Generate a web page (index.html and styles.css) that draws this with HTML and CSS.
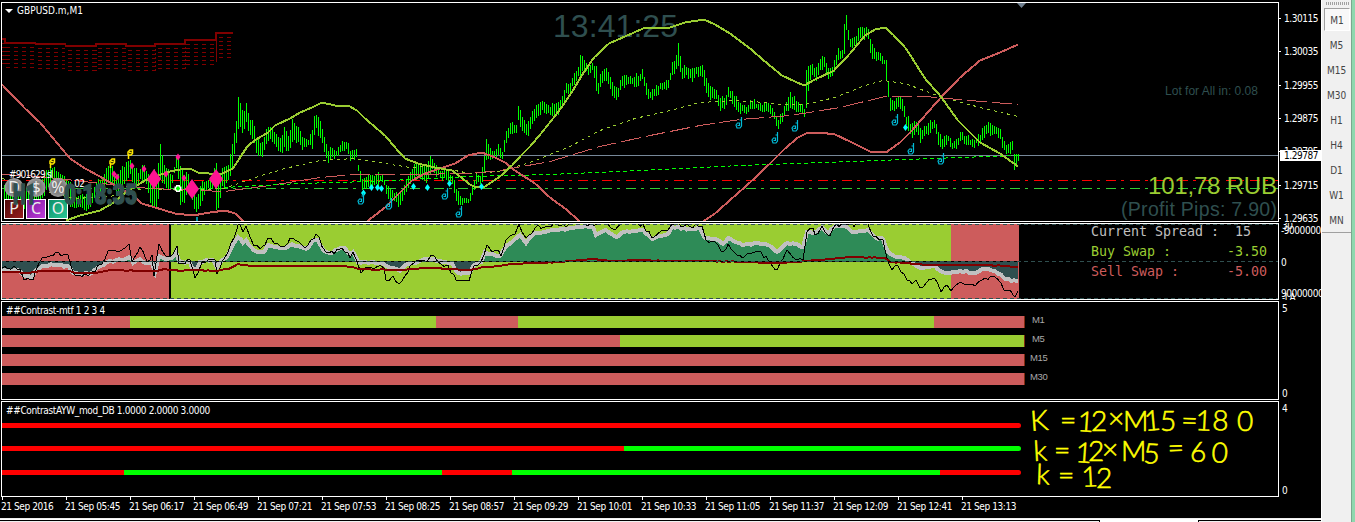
FILE: index.html
```html
<!DOCTYPE html>
<html lang="en">
<head>
  <meta charset="UTF-8" />
  <meta name="viewport" content="width=device-width, initial-scale=1.0" />
  <title>GBPUSD.m,M1</title>
  <link rel="stylesheet" href="styles.css">
</head>
<body>
  <main class="terminal">
    <section class="panel panel-price">
      <div class="plot">
        <svg id="price" viewBox="2 3 1276 218" width="1276" height="218">
          <text class="clock" x="553" y="37" textLength="125">13:41:25</text>
          <g id="steps"></g>
          <path class="px level" d="M2 155.5H1278" />
          <path class="px stop" d="M2 180.5H1278" />
          <path class="px entry" d="M2 188.5H1278" />
          <g id="bars"></g>
          <g id="lines"></g>
          <g id="marks"></g>
          <path d="M5 9h8l-4 4z" fill="#fff" />
          <path d="M1017 3h9l-4.500 5z" fill="#708090" />
          <text class="label" x="17" y="14" textLength="66">GBPUSD.m,M1</text>
          <text class="label" x="9" y="178" textLength="44">#901629 sl</text>
          <text class="label" x="70" y="187" textLength="15">.,02</text>
          <g class="round">
            <circle cx="14" cy="187.500" r="9.500" /><circle cx="36" cy="187.500" r="9.500" /><circle cx="58" cy="187.500" r="9.500" />
            <text x="14" y="193">D</text><text x="36" y="193">$</text><text x="58" y="193">%</text>
          </g>
          <g class="square">
            <rect x="4.500" y="199.500" width="19" height="19" fill="url(#gp)" />
            <rect x="26.500" y="199.500" width="19" height="19" fill="url(#gc)" />
            <rect x="48.500" y="199.500" width="19" height="19" fill="url(#go)" />
            <text x="14" y="214">P</text><text x="36" y="214">C</text><text x="58" y="214">O</text>
          </g>
          <text class="timer" x="13" y="204" textLength="23" lengthAdjust="spacingAndGlyphs">H1</text>
          <text class="timer" x="64" y="204" textLength="73" lengthAdjust="spacingAndGlyphs">0:18:35</text>
          <text class="lot" x="1165" y="95" textLength="93">Lot for All in: 0.08</text>
          <text class="profit" x="1148" y="194" textLength="129">101,78 RUB</text>
          <text class="pips" x="1121" y="216" textLength="156">(Profit Pips: 7.90)</text>
          <defs>
            <radialGradient id="gr"><stop offset="0" stop-color="#666" /><stop offset=".7" stop-color="#858585" /><stop offset="1" stop-color="#a0a0a0" /></radialGradient>
            <linearGradient id="gp" y2="1"><stop stop-color="#4c0808" /><stop offset="1" stop-color="#981d1d" /></linearGradient>
            <linearGradient id="gc" y2="1"><stop stop-color="#7a149c" /><stop offset="1" stop-color="#c040dc" /></linearGradient>
            <linearGradient id="go" y2="1"><stop stop-color="#0a8f68" /><stop offset="1" stop-color="#2dc796" /></linearGradient>
          </defs>
        </svg>
      </div>
      <div class="axis axis-price">
        <span>1.30115</span><span>1.30035</span><span>1.29955</span><span>1.29875</span><span>1.29795</span><span>1.29715</span><span>1.29635</span>
        <b class="current">1.29787</b>
      </div>
    </section>

    <section class="panel panel-osc">
      <div class="plot">
        <svg id="osc" viewBox="2 224 1276 75" width="1276" height="75">
          <rect x="2" y="224" width="167" height="75" fill="#cd5c5c" />
          <rect x="169" y="224" width="2" height="75" />
          <rect x="171" y="224" width="780" height="75" fill="#9acd32" />
          <rect x="951" y="224" width="68" height="75" fill="#cd5c5c" />
          <g id="waves"></g>
          <path class="px" d="M2 261.500H1019" stroke="#000" />
          <path class="px grid" d="M2 224.500H1278M2 261.500H1278M2 298.500H1278" />
          <g class="mono">
            <text x="1091" y="236" fill="#c0c0c0">Current Spread :  15</text>
            <text x="1091" y="256" fill="#9acd32">Buy Swap :       -3.50</text>
            <text x="1091" y="276" fill="#cd5c5c">Sell Swap :      -5.00</text>
          </g>
        </svg>
      </div>
      <div class="axis axis-osc">
        <span>-90000000</span><span>0</span><span>90000000</span>
        <i class="over-top">30</i><i class="over-bottom">-LA</i>
      </div>
    </section>

    <section class="panel panel-mtf">
      <div class="plot">
        <h2>##Contrast-mtf 1 2 3 4</h2>
        <div class="bands">
          <div class="band"><i class="dn" style="width:128px"></i><i class="up" style="width:306px"></i><i class="dn" style="width:82px"></i><i class="up" style="width:416px"></i><i class="dn end" style="width:91px"></i><span class="in">M1</span></div>
          <div class="band"><i class="dn" style="width:618px"></i><i class="up end" style="width:405px"></i><span class="in">M5</span></div>
          <div class="band"><i class="dn end" style="width:1023px"></i><span>M15</span></div>
          <div class="band"><i class="dn end" style="width:1023px"></i><span>M30</span></div>
        </div>
      </div>
      <div class="axis axis-range"><span>5</span><span>0</span></div>
    </section>

    <section class="panel panel-ayw">
      <div class="plot">
        <h2>##ContrastAYW_mod_DB 1.0000 2.0000 3.0000</h2>
        <div class="tracks">
          <div class="track"><i class="red" style="width:1019px"></i></div>
          <div class="track"><i class="red" style="width:622px"></i><i class="lime" style="width:397px"></i></div>
          <div class="track"><i class="red" style="width:122px"></i><i class="lime" style="width:318px"></i><i class="red" style="width:70px"></i><i class="lime" style="width:428px"></i><i class="red" style="width:81px"></i></div>
        </div>
        <svg class="notes" viewBox="1028 402 250 95" width="250" height="95">
          <text x="1031 1060 1077 1091 1108 1123 1145 1160 1181 1195 1212 1237" y="431 430 431 431 428 431 431 431 430 430 430 431" rotate="-4 0 4 0 0 0 -5 0 2 3 2 0">K=12×M15=180</text>
          <text x="1034 1054 1075 1088 1102 1121 1143 1168 1190 1211" y="461 460 462 461 459 461 463 458 462 462" rotate="-3 0 4 0 0 0 3 -2 0 4">k=12×M5=60</text>
          <text x="1036 1058 1082 1096" y="484 485 487 488" rotate="2 0 -3 0">k=12</text>
        </svg>
      </div>
      <div class="axis axis-range"><span>4</span><span>0</span></div>
    </section>

    <div class="times">
      <span>21 Sep 2016</span><span>21 Sep 05:45</span><span>21 Sep 06:17</span><span>21 Sep 06:49</span><span>21 Sep 07:21</span><span>21 Sep 07:53</span><span>21 Sep 08:25</span><span>21 Sep 08:57</span><span>21 Sep 09:29</span><span>21 Sep 10:01</span><span>21 Sep 10:33</span><span>21 Sep 11:05</span><span>21 Sep 11:37</span><span>21 Sep 12:09</span><span>21 Sep 12:41</span><span>21 Sep 13:13</span>
    </div>
    <div class="tabs"><i></i></div>
  </main>

  <aside class="toolbar">
    <div class="grip"></div>
    <nav>
      <a class="active">M1</a><a>M5</a><a>M15</a><a>M30</a><a>H1</a><a>H4</a><a>D1</a><a>W1</a><a>MN</a>
    </nav>
  </aside>
  <div class="edge"></div>

  <script src="script.js"></script>
</body>
</html>
```
FILE: styles.css
```css
* {
  margin: 0;
  padding: 0;
  box-sizing: border-box;
}
body {
  display: flex;
  width: 1355px;
  height: 522px;
  overflow: hidden;
  background: #f0f0f0;
  font-family: "DejaVu Sans Condensed", "DejaVu Sans", sans-serif;
  font-stretch: condensed;
  font-size: 10px;
  color: #fff;
}
svg {
  display: block;
}
.terminal {
  width: 1322px;
  height: 522px;
  background: #000;
  border-right: 1px solid #fff;
  display: flex;
  flex-direction: column;
  padding: 2px 0 0 1px;
}
.panel {
  display: flex;
  margin-bottom: 1px;
}
.plot {
  width: 1278px;
  border: 1px solid #fff;
  position: relative;
  overflow: hidden;
}
.panel-price { height: 220px; }
.panel-osc { height: 77px; }
.panel-mtf { height: 99px; }
.panel-ayw { height: 97px; margin-bottom: 0; }

/* price chart */
.px, #bars, #steps, #lines { shape-rendering: crispEdges; }
.px, #steps path, #lines path, #waves path { fill: none; }
.level { stroke: #778899; }
.stop { stroke: #f00; stroke-dasharray: 10 5 3 6; }
.entry { stroke: #32cd32; stroke-dasharray: 10 5 3 6; }
.grid { stroke: #2f4f4f; stroke-dasharray: 4 3; }
.label {
  fill: #fff;
  font-size: 10px;
}
.clock, .lot, .pips, .profit {
  font-family: "Liberation Sans", Arial, sans-serif;
  fill: #2f4f4f;
}
.clock { font-size: 32px; }
.lot { font-size: 12px; }
.pips { font-size: 19.5px; }
.profit {
  font-size: 24px;
  fill: #9acd32;
}
.timer {
  font: 900 27px Roboto, sans-serif;
  fill: #2f4f4f;
  stroke: #2f4f4f;
  stroke-width: 1.5;
}
.round circle { fill: url(#gr); }
.round text, .square text {
  font: 16px "Noto Sans", sans-serif;
  fill: #eee;
  text-anchor: middle;
}
.square rect { stroke: #fff; }
.mono text {
  font: 13.3px "DejaVu Sans Mono", monospace;
  white-space: pre;
}

/* scales */
.axis {
  flex: 1;
  position: relative;
  display: flex;
  flex-direction: column;
  justify-content: space-between;
  line-height: 11px;
  letter-spacing: -0.45px;
}
.axis span {
  padding-left: 5px;
  white-space: nowrap;
}
.axis-price {
  padding-top: 11px;
  margin-bottom: -2px;
}
.axis-price span {
  background: linear-gradient(#fff, #fff) 0 5px / 2px 1px no-repeat;
}
.current {
  position: absolute;
  left: 1px;
  right: 0;
  top: 148px;
  padding-left: 4px;
  background: #fff;
  color: #000;
  font-weight: normal;
}
.axis-osc {
  padding: 2px 0 1px;
  overflow: hidden;
}
.axis-osc span { padding-left: 2px; }
.over-top, .over-bottom {
  position: absolute;
  left: 3px;
  font-style: normal;
}
.over-top { top: -3px; }
.over-bottom { bottom: -3px; }
.axis-range { padding: 2px 0 1px; }
.axis-range span { padding-left: 3px; }

/* indicator rows */
h2 {
  font-size: 10px;
  font-weight: normal;
  line-height: 14px;
  padding: 2px 0 0 4px;
  height: 14px;
  letter-spacing: -0.35px;
}
.bands {
  display: flex;
  flex-direction: column;
  gap: 7px;
}
.band {
  display: flex;
  height: 12px;
}
.band span {
  color: #a9a9a9;
  font: 9.5px/8px "Liberation Sans", Arial, sans-serif;
  padding-left: 5px;
  letter-spacing: -0.3px;
}
.band .in { padding-left: 7px; }
.up { background: #9acd32; }
.dn { background: #cd5c5c; }
.end { border-right: 1px solid #802b10; }
.tracks {
  display: flex;
  flex-direction: column;
  gap: 18px;
  padding-top: 7px;
}
.track {
  display: flex;
  height: 5px;
  border-radius: 0 3px 3px 0;
  overflow: hidden;
  width: 1019px;
}
.track:last-child { margin-top: 1px; }
.red { background: #f00; }
.lime { background: #0f0; }
.notes {
  position: absolute;
  left: 1026px;
  top: 0;
}
.notes text {
  font: 300 28px Lato, sans-serif;
  fill: #ff0;
  stroke: #ff0;
  stroke-width: 0.6;
}

.times {
  display: flex;
  height: 21px;
  line-height: 14px;
}
.times span {
  width: 64px;
  flex: none;
  padding-top: 3px;
  letter-spacing: -0.42px;
  white-space: nowrap;
  background: linear-gradient(#fff, #fff) 1px 0 / 1px 3px no-repeat;
}
.tabs {
  height: 4px;
  margin-left: -1px;
  background: linear-gradient(#eee 0 1px, #fff 1px 2px, #000 2px 3px, #f0f0f0 3px);
  display: flex;
}
.tabs i {
  width: 100px;
  margin-left: 1099px;
  background: #fff;
  border: solid #000;
  border-width: 0 1px;
  margin-top: 2px;
}

/* period toolbar */
.toolbar {
  width: 29px;
  padding: 2px 1px 0 2px;
  color: #444;
}
.grip {
  height: 3px;
  margin: 0 1px 3px 2px;
  background: repeating-linear-gradient(90deg, #a0a0a0 0 1px, transparent 1px 2px);
}
.toolbar nav {
  border-bottom: 1px solid #a0a0a0;
  margin: 0 -1px 0 -2px;
  padding-left: 2px;
}
.toolbar a {
  display: flex;
  width: 25px;
  height: 25px;
  padding-top: 2px;
  align-items: center;
  justify-content: center;
}
.toolbar .active {
  width: 26px;
  height: 23px;
  margin-bottom: 1px;
  background: #f8f8f8;
  border: 1px solid #fff;
  border-top-color: #a0a0a0;
  border-left-color: #a0a0a0;
}
.edge {
  flex: 1;
  background: #8ed8ae;
  border-left: 1px solid #79a98e;
}
```
FILE: script.js
```javascript
// bar envelope: x, high, low
const range = [3,188,200, 12,185,200, 20,188,205, 30,190,208, 40,180,200, 46,172,190, 52,166,180, 58,172,182, 62,176,195, 70,180,205, 76,195,207, 84,195,208, 90,196,208, 94,186,198, 100,178,192, 106,170,184, 112,165,184, 116,178,196, 122,168,184, 130,160,172, 133,168,188, 138,172,182, 143,165,178, 148,172,190, 151,178,206, 154,170,206, 157,175,209, 160,142,178, 163,162,182, 168,170,190, 172,174,180, 177,153,165, 180,165,202, 184,175,203, 187,170,190, 190,180,190, 193,195,207, 197,200,212, 200,185,205, 205,180,190, 210,176,188, 214,170,185, 216,165,211, 218,180,209, 221,170,188, 227,167,182, 232,144,168, 235,130,147, 238,99,127, 240,103,128, 243,116,134, 246,104,120, 249,117,135, 253,122,140, 256,140,153, 262,142,154, 266,128,142, 270,127,138, 275,132,143, 280,138,151, 284,128,148, 288,135,149, 292,120,142, 298,126,140, 302,135,148, 308,140,145, 312,128,146, 315,111,126, 319,120,136, 323,132,146, 327,150,162, 332,147,158, 337,150,156, 341,140,148, 347,142,150, 350,152,159, 356,148,158, 358,163,172, 362,178,189, 368,173,187, 374,174,185, 380,174,182, 384,178,182, 387,186,200, 392,192,198, 398,195,206, 402,190,200, 407,176,186, 412,168,180, 416,163,175, 421,166,180, 427,165,182, 431,156,170, 437,167,175, 442,170,180, 447,170,177, 453,178,186, 457,190,203, 462,197,202, 468,197,203, 472,185,195, 475,176,185, 480,176,182, 483,162,178, 486,140,158, 490,148,158, 493,153,160, 498,145,155, 502,150,158, 506,131,142, 511,122,132, 516,125,132, 518,106,120, 520,112,128, 524,122,132, 527,126,136, 531,115,126, 536,105,117, 542,100,110, 546,102,112, 551,105,116, 555,102,112, 558,103,114, 563,92,102, 566,84,94, 570,82,92, 575,70,80, 579,66,76, 580,54,74, 584,58,70, 588,64,72, 593,65,70, 596,68,90, 598,82,92, 602,70,82, 607,70,80, 612,82,94, 617,88,98, 621,78,86, 627,76,84, 632,77,84, 638,74,84, 643,70,80, 646,84,94, 651,92,100, 656,86,95, 662,81,87, 669,82,88, 671,63,72, 675,60,72, 678,44,66, 682,66,78, 687,67,75, 692,70,80, 697,65,75, 702,64,74, 706,78,94, 709,88,100, 715,90,97, 720,97,108, 725,98,108, 728,87,95, 733,93,102, 739,102,112, 746,106,112, 752,101,108, 760,103,109, 767,104,110, 773,110,118, 777,120,128, 781,115,122, 785,105,114, 790,93,105, 796,100,112, 800,104,112, 804,108,115, 806,72,105, 810,64,78, 813,63,72, 815,70,84, 819,62,72, 824,55,68, 828,70,77, 833,64,74, 838,50,60, 843,49,54, 844,22,52, 846,17,30, 850,38,45, 856,38,46, 859,27,38, 864,29,38, 868,28,38, 871,42,56, 876,50,60, 882,58,63, 885,60,65, 886,62,82, 888,80,94, 890,96,108, 895,102,110, 899,94,105, 903,100,112, 906,115,126, 912,125,138, 917,120,128, 920,130,140, 927,125,134, 934,118,128, 938,130,143, 942,140,148, 947,132,140, 952,143,150, 957,138,146, 961,132,140, 967,136,143, 973,140,147, 979,135,143, 985,125,135, 989,123,133, 995,125,132, 1000,128,138, 1003,140,150, 1008,145,152, 1013,142,150, 1014,152,168, 1016,153,166, 1018,153,158];

const curves = [
  ['#9acd32', 1, '3 4', '2,178 40,190 75,198 110,196 145,188 185,190 224,188 255,177 285,168 320,160 355,158 385,163 410,167 430,166 455,170 470,173 500,171 530,162 570,146 600,130 635,118 670,110 700,102 735,100 765,102 780,104 805,104 835,97 865,85 883,80 905,83 940,96 980,107 1018,116'],
  ['#cd5c5c', 1, '20 5', '2,174 40,176 110,184 150,188 200,190 224,191 270,185 320,177 355,174 410,174 470,173 500,170 550,161 600,146 650,135 700,125 740,119 790,115 840,107 885,96 925,96 970,100 1018,104'],
  ['#00ff00', 1, '4 3', '224,187 300,183 370,181 470,176 550,174 640,170 740,165 850,161 960,157 1018,155'],
  ['#cd5c5c', 2, '', '2,84 25,108 40,122 55,140 70,158 85,168 100,176 120,188 132,194 142,203 155,207 175,213 193,215 210,212 225,210 235,213 244,221'],
  ['#cd5c5c', 2, '', '367,221 385,207 400,192 412,180 425,173 440,168 455,163 468,155 482,152 495,157 505,162 515,170 535,183 550,197 565,208 580,221'],
  ['#cd5c5c', 2, '', '703,221 715,213 733,197 750,182 770,163 785,148 798,137 808,132 820,132 835,134 850,141 870,151 886,152 900,142 912,130 925,115 940,98 960,77 980,60 1000,52 1018,44'],
  ['#9acd32', 2, '', '66,220 80,215 100,210 112,203 130,189 145,180 158,175 170,171 185,168 192,169 198,172 220,174 233,168 240,157 248,145 256,139 268,132 275,125 290,118 300,112 312,107 322,102 335,105 348,105 357,110 365,118 385,135 396,148 405,158 418,163 435,167 452,170 460,176 470,184 476,187 485,186 500,176 512,165 521,155 530,146 541,133 553,118 563,105 574,88 583,73 594,57 609,43 625,36 643,28 670,27 685,22 704,19 715,24 730,33 750,48 765,61 782,75 795,81 804,85 815,79 834,70 850,53 865,35 875,29 885,27 893,34 906,48 925,78 940,95 958,120 980,142 1000,153 1018,166']
];

const step = '2,39 5,39 5,43 35,43 36,44 65,44 66,46 96,46 96,44 126,44 126,46 155,46 155,44 185,44 185,40 216,40 216,33 233,33';

const silver = '2,271 20,271 24,276 32,277 36,270 42,266 55,265 68,266 73,273 80,274 92,273 100,266 110,261 122,260 130,257 133,263 140,259 146,263 152,263 155,272 159,256 167,259 172,258 176,252 179,261 190,263 193,269 197,269 200,262 213,260 217,268 220,262 227,257 232,246 238,237 243,243 246,240 251,247 257,252 264,252 268,245 275,247 285,248 292,244 300,247 308,248 313,240 318,240 324,251 332,253 340,248 345,248 350,254 353,252 358,262 380,263 390,268 400,271 407,264 418,262 428,259 440,261 452,263 458,273 470,273 474,265 481,262 485,252 490,254 500,256 507,245 514,240 520,235 526,243 535,233 548,231 562,229 580,227 593,227 596,235 606,230 616,237 624,232 643,230 652,239 668,234 672,227 690,229 700,228 705,238 715,239 723,244 728,238 742,245 755,243 768,245 777,252 787,243 795,244 803,247 807,232 815,232 822,227 828,233 835,226 845,226 852,232 868,230 875,237 883,239 888,252 896,257 905,258 920,268 935,266 942,272 950,273 960,271 975,273 985,269 995,271 1005,279 1018,281';
const fast = '2,268 20,269 24,280 33,280 36,270 42,258 50,256 55,253 68,255 73,273 88,276 92,272 102,264 108,251 118,252 122,250 129,244 132,262 140,247 147,262 152,255 154,276 159,244 167,257 173,254 177,246 179,264 190,260 195,278 202,262 215,260 217,274 222,262 228,252 236,232 239,222 243,232 246,226 254,246 262,247 268,238 278,244 285,246 290,238 305,248 311,240 316,234 326,252 334,254 342,248 350,258 353,252 361,273 365,268 384,268 386,280 393,276 399,284 405,276 410,266 420,260 427,262 431,255 438,262 448,265 456,280 469,281 474,266 481,262 487,245 492,252 496,250 501,256 506,240 515,234 519,224 526,238 535,228 548,226 570,224 608,224 615,230 622,224 643,224 652,238 662,230 668,230 672,224 702,226 706,240 715,242 723,252 728,244 742,258 755,252 766,256 777,270 787,250 797,260 803,260 807,232 813,228 815,235 822,226 830,236 836,224 868,224 873,236 883,240 888,262 892,270 898,266 907,280 912,284 916,280 920,288 932,279 934,278 941,292 947,285 951,291 960,282 975,286 982,280 995,277 1004,290 1010,290 1015,297 1018,291';
const slow = '2,272 25,273 40,271 70,271 75,273 95,273 110,270 155,271 165,269 180,271 190,270 215,271 228,269 238,264 250,266 320,266 345,266 360,269 400,270 430,268 450,269 470,270 485,267 500,266 510,264 560,262 590,259 615,261 640,260 670,261 705,261 780,263 805,261 830,259 848,257 885,258 890,262 930,265 990,265 1018,267';

const put = (id, html) => { document.getElementById(id).innerHTML = html; };
const line = pts => 'M' + pts.split(' ').join('L');

let seed = 7;
function noise(n) {
  seed = (seed * 16807) % 2147483647;
  return (seed / 2147483647 - 0.5) * 2 * n;
}

// adds small swings between the key points
function rough(pts, n) {
  const p = pts.split(' ').map(s => s.split(',').map(Number));
  const out = [];
  for (let i = 0; i < p.length - 1; i++) {
    const [x1, y1] = p[i], [x2, y2] = p[i + 1];
    out.push(x1 + ',' + y1);
    for (let x = x1 + 3; x < x2 - 1; x += 3) {
      out.push(x + ',' + (y1 + (y2 - y1) * (x - x1) / (x2 - x1) + noise(n)).toFixed(1));
    }
  }
  out.push(p[p.length - 1].join(','));
  return out.join(' ');
}

let bars = '';
let k = 0;
for (let x = 4; x <= 1018; x += 2) {
  while (range[k + 3] < x) k += 3;
  const t = (x - range[k]) / (range[k + 3] - range[k]);
  const hi = range[k + 1] + (range[k + 4] - range[k + 1]) * t + noise(2.2);
  const lo = range[k + 2] + (range[k + 5] - range[k + 2]) * t + 1 + noise(2.2);
  bars += `<rect x="${x}" y="${Math.round(hi)}" width="1" height="${Math.max(4, Math.round(lo - hi))}" fill="#0f0"/>`;
}
put('bars', bars);

put('lines', curves.map(([color, w, dash, pts]) =>
  `<path d="${line(pts)}" transform="translate(0 .5)" stroke="${color}" stroke-width="${w}" stroke-dasharray="${dash}"/>`).join(''));

let steps = `<path d="${line(step)}" stroke="#800000" stroke-width="2"/>`;
for (let i = 1; i <= 6; i++) {
  steps += `<path transform="translate(0 ${i * 4})" d="${line(step)}" stroke="#800000" stroke-dasharray="4 4"/>`;
}
put('steps', steps);

const diamond = (x, y, w, h, c) => `<path d="M${x} ${y - h}l${w} ${h}l${-w} ${h}l${-w} ${-h}z" fill="${c}"/>`;
const up = (x, y) => `<path transform="translate(${x} ${y})" d="M2.500-7V2L1 4h-3L-3 1l1.500-2H.5v2.500h-2M.5-4h2" fill="none" stroke="#00bcd8" stroke-width="1.200"/>`;
const down = (x, y) => `<path transform="translate(${x} ${y})" d="M-1.500 5V0M-2 1V-2L0-4h2.500v3.500L1 1h-3M-1-1.500h2.500" fill="none" stroke="#ffe800" stroke-width="1.500"/>`;

let marks = '';
[[154,179],[192,189],[216,179]].forEach(m => marks += diamond(m[0], m[1], 7, 10, '#ff1493'));
[[114,174],[117,177],[132,166],[144,169],[166,174],[178,157],[184,178]].forEach(m => marks += diamond(m[0], m[1], 2.5, 3.5, '#ff1493'));
[[363,193],[371,187.5],[377,187.5],[381,188.5],[413,186.5],[427,187.5],[449,183.5],[481,186.5],[905,127.5]].forEach(m => marks += diamond(m[0] + .5, m[1], 2.5, 3.5, '#0ff'));
[[361,200],[389,205],[445,195],[459,213],[739,124],[775,139],[795,127],[895,121],[911,150],[941,160]].forEach(m => marks += up(...m));
[[52,163],[112,163],[130,154]].forEach(m => marks += down(...m));
marks += '<path d="M174.500 188.500h7M178 185v7" stroke="#fff" stroke-width="4"/><path d="M176 188.500h4M178 186.500v4" stroke="#0f0" stroke-width="2"/>';
marks += '<path d="M197 217v4" stroke="#00bcd8" stroke-width="1.500"/>';
put('marks', marks);

// oscillator fill is split at the zero level
const area = line(silver) + 'L1018,261.5L2,261.5Z';
put('waves', `
  <clipPath id="above"><rect x="2" y="224" width="1017" height="37.500"/></clipPath>
  <clipPath id="below"><rect x="2" y="261.500" width="1017" height="37.500"/></clipPath>
  <g clip-path="url(#above)"><path d="${area}" style="fill:#2e8b57"/></g>
  <g clip-path="url(#below)"><path d="${area}" style="fill:#2f4f4f"/></g>
  <g shape-rendering="crispEdges">
    <path d="${line(rough(silver, 1))}" stroke="#c0c0c0" stroke-width="4"/>
    <path d="${line(rough(fast, 2.5))}" stroke="#000"/>
    <path d="${line(rough(slow, .4))}" stroke="#800000" stroke-width="2"/>
  </g>`);
```
